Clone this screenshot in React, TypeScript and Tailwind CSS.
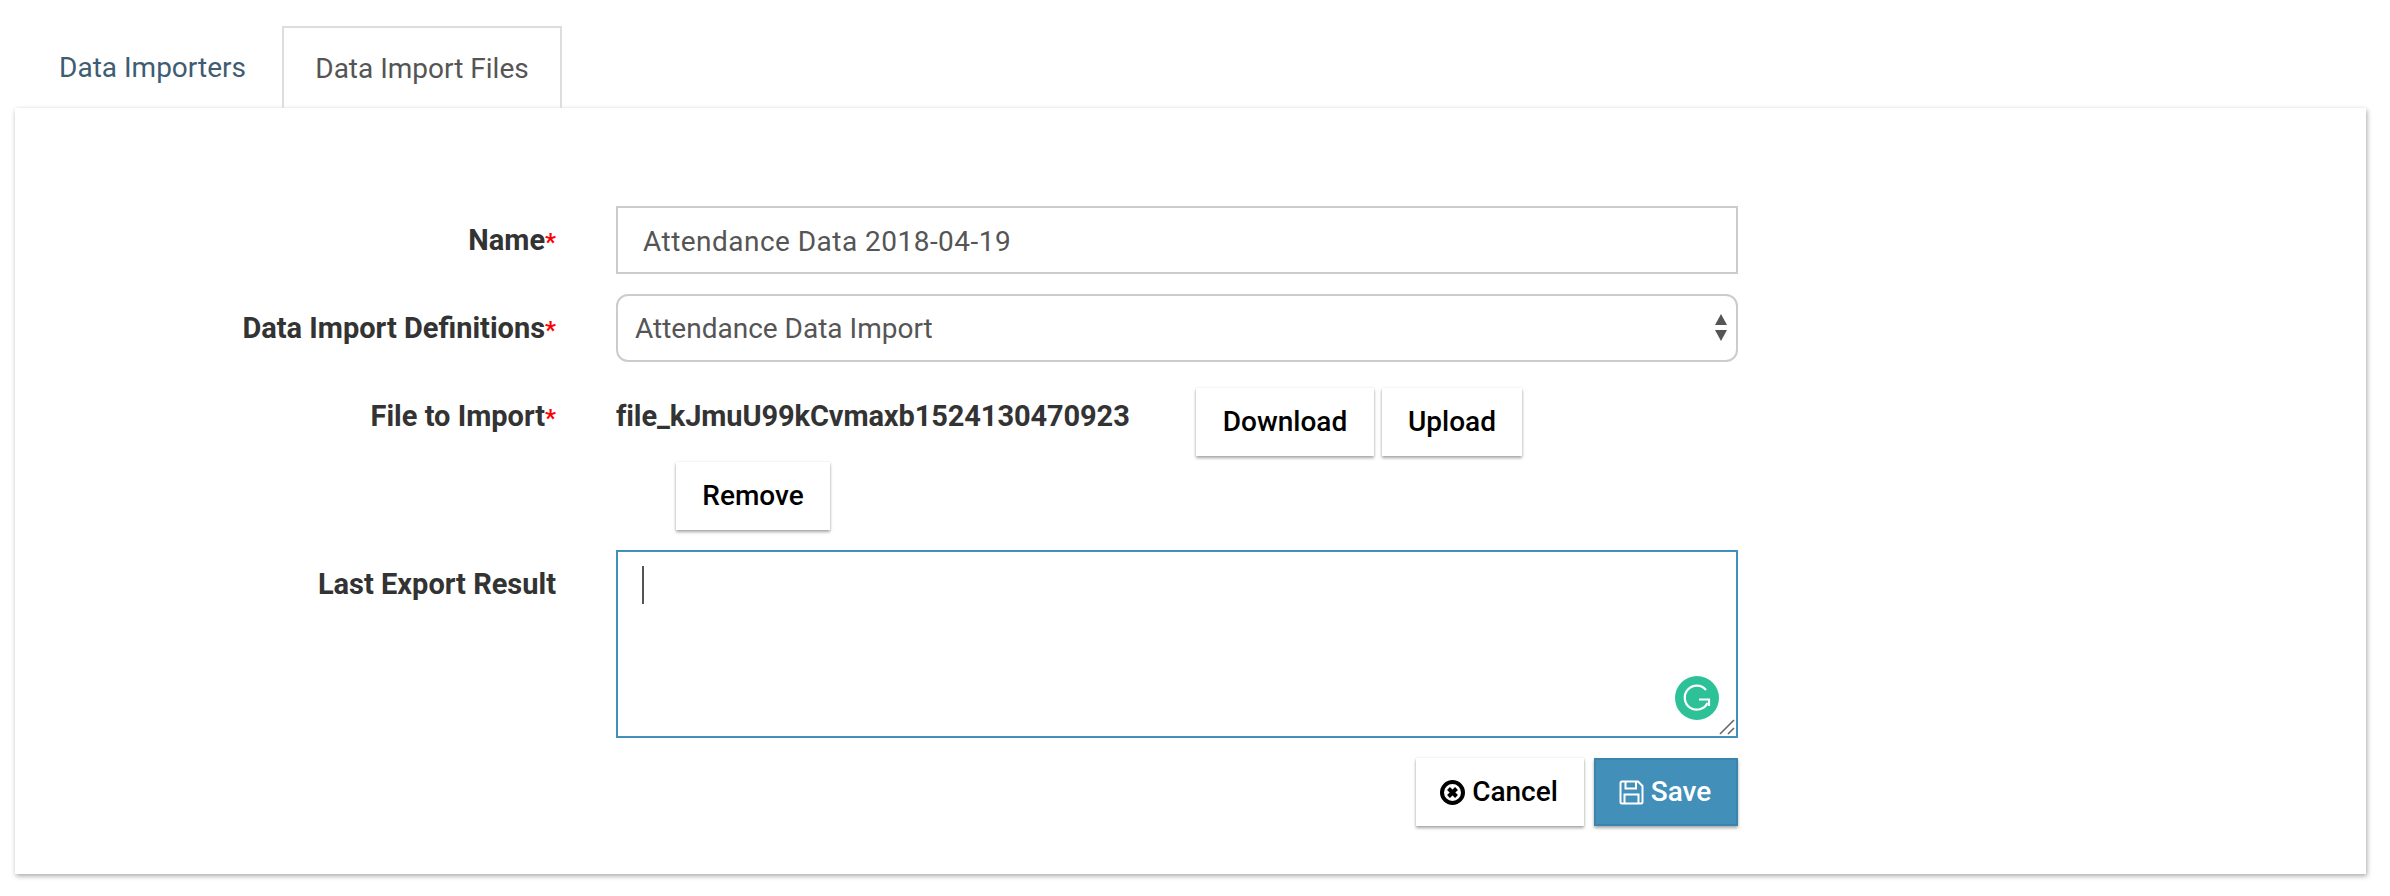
import React from "react";

function Req() {
  return <span className="text-[#ff0000] text-[24px]">*</span>;
}

function Label({ children, req }: { children: React.ReactNode; req?: boolean }) {
  return (
    <div className="w-[541px] shrink-0 text-right font-bold text-[29px] leading-[40px] text-[#333333] whitespace-nowrap">
      {children}
      {req && <Req />}
    </div>
  );
}

function Btn({ className, children }: { className: string; children: React.ReactNode }) {
  return (
    <button className={"h-[68px] bg-white text-black text-[28px] font-medium shadow-[0_2px_3px_rgba(0,0,0,0.35),0_0_2px_rgba(0,0,0,0.08)] flex items-center justify-center " + className}>
      {children}
    </button>
  );
}

export default function App() {
  return (
    <div className="w-[2390px] h-[896px] bg-white font-['Roboto',sans-serif] pt-[26px] pl-[15px] overflow-hidden">
      <div className="flex pl-[11px] h-[82px] gap-[3px] text-[28px]">
        <div className="w-[253px] h-[82px] pt-[2px] flex items-center justify-center text-[#3e5c72]">Data Importers</div>
        <div className="w-[280px] h-[82px] pt-[2px] border-[2px] border-b-0 border-[#dddddd] flex items-center justify-center text-[#555555]">Data Import Files</div>
      </div>
      <div className="w-[2351px] h-[766px] bg-white shadow-[1px_2px_5px_rgba(0,0,0,0.35)] pt-[98px] flex flex-col">
        <div className="flex items-start h-[68px]">
          <div className="pt-[14px]"><Label req>Name</Label></div>
          <div className="ml-[60px] w-[1122px] h-[68px] border-[2px] border-[#cccccc] pl-[25px] pt-[3px] flex items-center text-[28px] tracking-[0.47px] text-[#555555]">
            Attendance Data 2018-04-19
          </div>
        </div>
        <div className="flex items-start h-[68px] mt-[20px]">
          <div className="pt-[14px]"><Label req>Data Import Definitions</Label></div>
          <div className="ml-[60px] w-[1122px] h-[68px] border-[2px] border-[#cccccc] rounded-[12px] pl-[17px] pr-[8px] flex items-center justify-between text-[28px] text-[#555555]">
            <span className="pt-[2px]">Attendance Data Import</span>
            <svg width="14" height="28" viewBox="0 0 14 28">
              <path d="M7 0 L13 11 L1 11 Z" fill="#555555" />
              <path d="M1 16 L13 16 L7 27 Z" fill="#555555" />
            </svg>
          </div>
        </div>
        <div className="flex items-start mt-[26px] h-[68px]">
          <div className="pt-[8px]"><Label req>File to Import</Label></div>
          <div className="ml-[60px] w-[580px] pt-[8px] font-bold text-[29px] tracking-[-0.1px] leading-[40px] text-[#333333] whitespace-nowrap">
            file_kJmuU99kCvmaxb1524130470923
          </div>
          <Btn className="w-[178px]">Download</Btn>
          <Btn className="w-[140px] ml-[8px]">Upload</Btn>
        </div>
        <div className="pl-[661px] mt-[6px]">
          <Btn className="w-[154px]">Remove</Btn>
        </div>
        <div className="flex items-start mt-[20px]">
          <div className="pt-[14px]"><Label>Last Export Result</Label></div>
          <div className="ml-[60px] relative w-[1122px] h-[188px]">
            <textarea className="block w-full h-full border-[2px] border-[#428fb9] bg-white outline-none resize-none" defaultValue="" />
            <div className="absolute left-[26px] top-[16px] w-[2px] h-[38px] bg-[#555555]" />
            <div className="absolute left-[1059px] top-[126px] w-[44px] h-[44px] rounded-full bg-[#2cc197] flex items-center justify-center">
              <svg width="32" height="32" viewBox="0 0 32 32" fill="none" stroke="#ffffff" strokeWidth="2.2">
                <path d="M25 8 A12 12 0 1 0 26.5 21" />
                <path d="M18 17.5 L28 17.5 L28 24" />
              </svg>
            </div>
            <svg className="absolute right-[3px] bottom-[3px]" width="16" height="16" viewBox="0 0 16 16" fill="none" stroke="#666666" strokeWidth="1.6">
              <path d="M1 15 L15 1" />
              <path d="M9 15 L15 9" />
            </svg>
          </div>
        </div>
        <div className="flex mt-[20px] pl-[1401px]">
          <Btn className="w-[168px] gap-[7px] pr-[2px]">
            <svg width="25" height="25" viewBox="0 0 25 25" fill="none" stroke="#000000">
              <circle cx="12.5" cy="12.5" r="10.5" strokeWidth="4" />
              <path d="M8.5 8.5 L16.5 16.5 M16.5 8.5 L8.5 16.5" strokeWidth="4" />
            </svg>
            Cancel
          </Btn>
          <button className="ml-[10px] w-[144px] h-[68px] bg-[#428fb9] border-[2px] border-[#3d84ab] text-white text-[28px] font-medium shadow-[0_2px_3px_rgba(0,0,0,0.35)] flex items-center justify-center gap-[7px] pr-[2px]">
            <svg width="25" height="25" viewBox="0 0 25 25" fill="none" stroke="#ffffff" strokeWidth="2">
              <path d="M1.5 3 Q1.5 1.5 3 1.5 L19 1.5 L23.5 6 L23.5 22 Q23.5 23.5 22 23.5 L3 23.5 Q1.5 23.5 1.5 22 Z" />
              <path d="M6.5 1.5 L6.5 8.5 L17 8.5 L17 1.5" />
              <path d="M5.5 23.5 L5.5 14.5 L19.5 14.5 L19.5 23.5" />
            </svg>
            Save
          </button>
        </div>
      </div>
    </div>
  );
}
